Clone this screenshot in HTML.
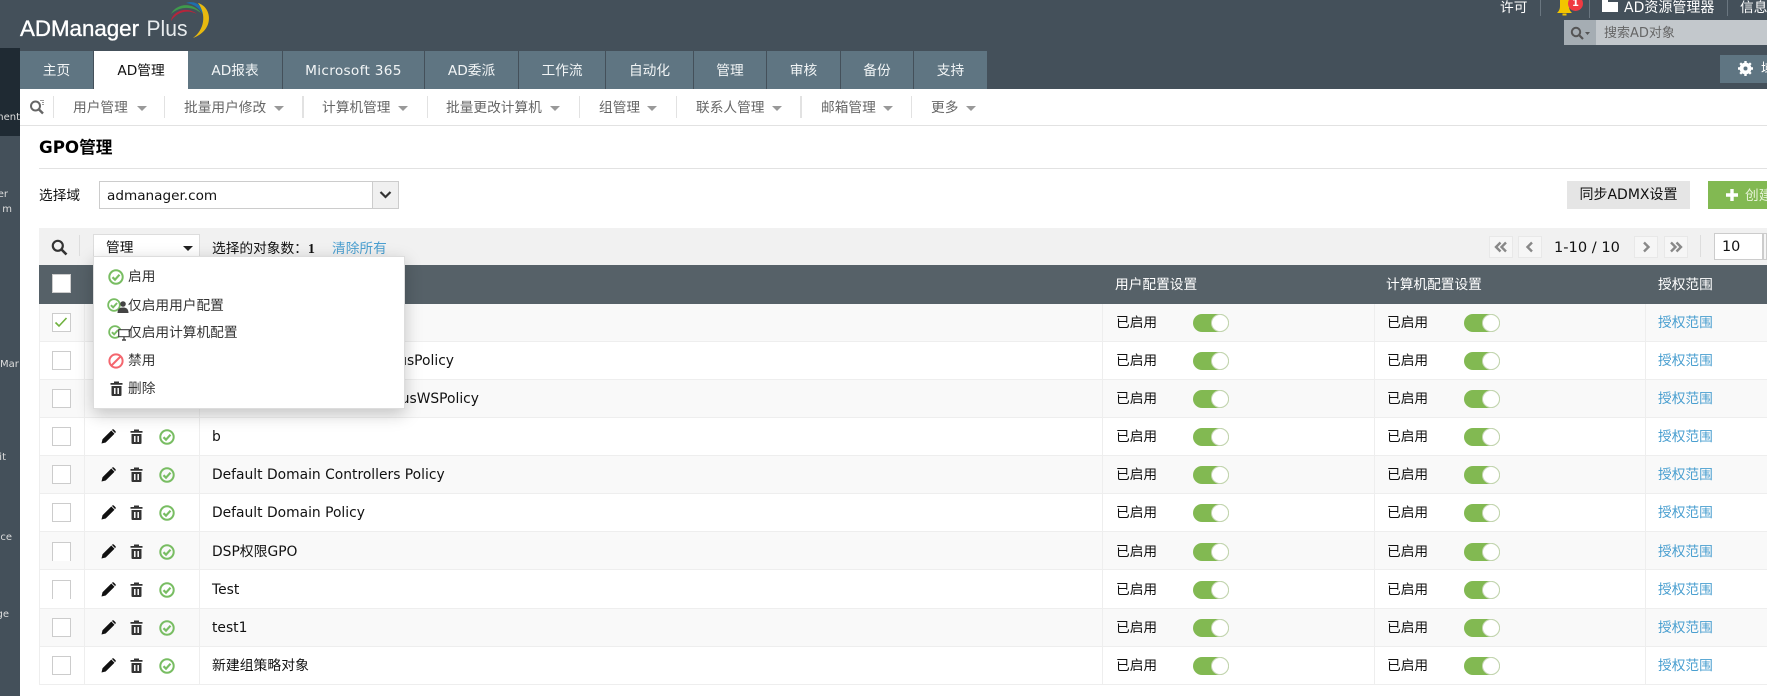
<!DOCTYPE html>
<html lang="zh"><head><meta charset="utf-8"><title>GPO管理</title>
<style>
html,body{margin:0;padding:0;background:#fff}
body{position:relative;width:1767px;height:696px;overflow:hidden;font-family:"DejaVu Sans","Noto Sans CJK SC",sans-serif;font-size:13.7px;color:#111}
.a{position:absolute;white-space:nowrap}
.tab{position:absolute;top:51px;height:38px;line-height:40px;background:#5f7582;color:#f2f5f6;text-align:center;box-sizing:border-box;border-right:1px solid #44505a;font-size:13.7px}
.sn{position:absolute;top:89px;height:36px;line-height:38px;color:#666;white-space:nowrap}
.sep{position:absolute;top:96px;height:22px;width:1px;background:#e2e2e2}
.car{position:absolute;top:106px;width:0;height:0;border-left:5px solid transparent;border-right:5px solid transparent;border-top:5px solid #999}
.side{position:absolute;left:0;width:20px;height:14px;line-height:14px;overflow:hidden;color:#ddd;font-size:10px}
.side span{position:absolute;white-space:nowrap;right:0}
.row{position:absolute;left:39px;width:1728px;height:38px;box-sizing:border-box;border-bottom:1px solid #eee;border-left:1px solid #eee;line-height:39px}
.g{background:#f9f9f9}
.v{position:absolute;top:0;bottom:0;width:1px;background:#eee}
.cb{position:absolute;left:12px;top:9px;width:19px;height:19px;box-sizing:border-box;border:1.5px solid #ccc;background:#fff}
.nm{position:absolute;left:172px;white-space:nowrap;font-size:13.85px}
.en{position:absolute;white-space:nowrap}
.lk{position:absolute;left:1618px;color:#4a9fd0;white-space:nowrap}
.tg{position:absolute;top:10px;width:36px;height:18px;border-radius:9px;background:#82b952}
.tg:after{content:"";position:absolute;right:0;top:0;width:18px;height:18px;box-sizing:border-box;border-radius:9px;background:#fff;border:1px solid #c6d6b4}
.ic{position:absolute}
.pg{position:absolute;top:236px;width:24px;height:22px;box-sizing:border-box;background:#f6f6f6;border:1px solid #e8e8e8}
.pg svg{position:absolute;left:4px;top:4px}
.mi{position:absolute;left:128px;color:#333;white-space:nowrap;line-height:20px}
</style></head><body>
<svg width="0" height="0" style="position:absolute">
<defs>
<symbol id="pen" viewBox="0 0 15 15"><path d="M0.500 14.500l1-4.200L10.300 1.500l3.200 3.200-8.800 8.800z M11.200 0.600c.5-.5 1.200-.5 1.700 0l1.500 1.500c.5.5.5 1.200 0 1.700l-.3.3-3.200-3.200z" fill="#111"/></symbol>
<symbol id="tr" viewBox="0 0 13 15"><path d="M4 0.500h5v1.500h3.500v1.800H0.500V2H4z M1.500 5h10v9c0 .5-.4 1-1 1h-8c-.6 0-1-.5-1-1z" fill="#333"/><path d="M4.800 7v6M8.200 7v6" stroke="#fff" stroke-width="1.500"/></symbol>
<symbol id="ok" viewBox="0 0 16 16"><circle cx="8" cy="8" r="6.700" fill="none" stroke="#78bd62" stroke-width="2"/><path d="M4.500 8.200l2.500 2.500 4.500-5" fill="none" stroke="#78bd62" stroke-width="2.200"/></symbol>
</defs></svg>

<!-- top bar -->
<div class="a" style="left:0;top:0;width:1767px;height:89px;background:#44505a"></div>
<div class="a" style="left:0;top:48px;width:20px;height:648px;background:#44505a"></div>
<div class="a" style="left:0;top:48px;width:20px;height:88px;background:#1f2a33"></div>
<div class="side" style="top:111px"><span>Management</span></div>
<div class="side" style="top:188px"><span style="right:12px">er</span></div>
<div class="side" style="top:203px"><span style="right:8px">m</span></div>
<div class="side" style="top:358px"><span style="right:auto;left:0">Mar</span></div>
<div class="side" style="top:451px"><span style="right:14px">it</span></div>
<div class="side" style="top:531px"><span style="right:8px">ice</span></div>
<div class="side" style="top:608px"><span style="right:11px">ge</span></div>

<!-- logo -->
<svg class="a" style="left:18px;top:0" width="200" height="48" viewBox="18 0 200 48">
<text x="20" y="36" fill="#fff" stroke="#fff" stroke-width=".35" font-family="Liberation Sans" font-size="22" textLength="119" lengthAdjust="spacingAndGlyphs">ADManager</text>
<text x="146.500" y="36" fill="#e8ecee" font-family="Liberation Sans" font-size="22" textLength="41" lengthAdjust="spacingAndGlyphs">Plus</text>
<path d="M171 21C172 12 186 5 197 14C187 9 177 12 171 21z" fill="#b8243a"/>
<path d="M171 14C176 4 192 1 201 13C192 6 180 6 171 14z" fill="#3f9a4c"/>
<path d="M186 3C194 0 205 4 206 22C203 11 196 4 186 3z" fill="#1d6fae"/>
<path d="M198 3C212 7 215 30 193 38C204 30 207 15 198 3z" fill="#e8b90f"/>
</svg>

<!-- top right -->
<div class="a" style="left:1500px;top:-1px;color:#fff;line-height:18px">许可</div>
<div class="a" style="left:1540px;top:0;width:1px;height:16px;background:#6a7680"></div>
<svg class="a" style="left:1556px;top:0" width="17" height="16" viewBox="0 0 17 16"><path d="M4 0h9v6c0 3 1 5 3 7H1c2-2 3-4 3-7z M6.500 13.500h4v2h-4z" fill="#f2c500"/></svg>
<div class="a" style="left:1568px;top:-4px;width:15px;height:15px;border-radius:8px;background:#ef3a42;color:#fff;font-size:10px;font-weight:bold;text-align:center;line-height:15px">1</div>
<div class="a" style="left:1589px;top:0;width:1px;height:18px;background:#6a7680"></div>
<svg class="a" style="left:1602px;top:0" width="16" height="12" viewBox="0 0 16 12"><path d="M0 0h6v2h10v10H0z" fill="#fff"/></svg>
<div class="a" style="left:1624px;top:-1px;color:#fff;line-height:18px;font-size:14px">AD资源管理器</div>
<div class="a" style="left:1727px;top:0;width:1px;height:16px;background:#6a7680"></div>
<div class="a" style="left:1740px;top:-1px;color:#fff;line-height:18px">信息</div>
<div class="a" style="left:1564px;top:20px;width:32px;height:25px;background:#a5adb3"></div>
<div class="a" style="left:1596px;top:20px;width:171px;height:25px;background:#c3c8cc;color:#666;line-height:27px;text-indent:8px;font-size:13px">搜索AD对象</div>
<svg class="a" style="left:1570px;top:26px" width="22" height="14" viewBox="0 0 22 14"><circle cx="6" cy="6" r="4.200" fill="none" stroke="#555" stroke-width="2"/><path d="M9 9l4 4" stroke="#555" stroke-width="2.200"/><path d="M15 6h5l-2.500 3z" fill="#555"/></svg>
<div class="a" style="left:1720px;top:55px;width:47px;height:28px;background:#5f7582"></div>
<svg class="a" style="left:1738px;top:61px" width="15" height="15" viewBox="0 0 15 15"><circle cx="7.500" cy="7.500" r="4.400" fill="none" stroke="#fff" stroke-width="3"/><path d="M7.500 0v15M0 7.500h15M2.200 2.200l10.600 10.600M12.800 2.200L2.200 12.800" stroke="#fff" stroke-width="2.400"/><circle cx="7.500" cy="7.500" r="2" fill="#5f7582"/></svg>
<div class="a" style="left:1761px;top:55px;width:6px;height:28px;overflow:hidden;color:#fff;line-height:28px">域</div>

<!-- tabs -->
<div class="tab" style="left:20px;width:74px">主页</div>
<div class="tab" style="left:94px;width:94px;background:#fff;color:#111;border:0">AD管理</div>
<div class="tab" style="left:188px;width:95px">AD报表</div>
<div class="tab" style="left:283px;width:142px;letter-spacing:.3px">Microsoft 365</div>
<div class="tab" style="left:425px;width:94px">AD委派</div>
<div class="tab" style="left:519px;width:87px">工作流</div>
<div class="tab" style="left:606px;width:88px">自动化</div>
<div class="tab" style="left:694px;width:73px">管理</div>
<div class="tab" style="left:767px;width:74px">审核</div>
<div class="tab" style="left:841px;width:73px">备份</div>
<div class="tab" style="left:914px;width:73px;border-right:0">支持</div>

<!-- subnav -->
<svg class="a" style="left:29px;top:99px" width="16" height="16" viewBox="0 0 16 16"><circle cx="6.500" cy="7" r="4.500" fill="none" stroke="#666" stroke-width="2"/><path d="M10 10.500l4 4" stroke="#666" stroke-width="2.400"/><path d="M11 1.500h4M13 3.500h2M13 5.500h2" stroke="#999"/></svg>
<div class="sep" style="left:53px"></div>
<div class="sn" style="left:73px">用户管理</div><div class="car" style="left:137px"></div>
<div class="sep" style="left:164px"></div>
<div class="sn" style="left:184px">批量用户修改</div><div class="car" style="left:274px"></div>
<div class="sep" style="left:302px;width:2px"></div>
<div class="sn" style="left:322px">计算机管理</div><div class="car" style="left:398px"></div>
<div class="sep" style="left:427px"></div>
<div class="sn" style="left:446px">批量更改计算机</div><div class="car" style="left:550px"></div>
<div class="sep" style="left:579px"></div>
<div class="sn" style="left:599px">组管理</div><div class="car" style="left:647px"></div>
<div class="sep" style="left:676px"></div>
<div class="sn" style="left:696px">联系人管理</div><div class="car" style="left:772px"></div>
<div class="sep" style="left:800px;width:2px"></div>
<div class="sn" style="left:821px">邮箱管理</div><div class="car" style="left:883px"></div>
<div class="sep" style="left:911px"></div>
<div class="sn" style="left:931px">更多</div><div class="car" style="left:966px"></div>
<div class="a" style="left:20px;top:125px;width:1747px;height:1px;background:#e2e2e2"></div>

<!-- title -->
<div class="a" style="left:39px;top:135px;font-size:16.700px;font-weight:bold;line-height:24px;color:#000">GPO管理</div>
<div class="a" style="left:39px;top:168px;width:1728px;height:1px;background:#e2e2e2"></div>
<div class="a" style="left:39px;top:186px;line-height:20px;font-size:13.700px">选择域</div>
<div class="a" style="left:99px;top:181px;width:300px;height:28px;box-sizing:border-box;border:1px solid #ccc;background:#fff;line-height:28px;padding-left:7px;font-size:13.600px">admanager.com</div>
<div class="a" style="left:372px;top:182px;width:25px;height:26px;background:#f0f0f0;border-left:1px solid #ccc"></div>
<svg class="a" style="left:379px;top:191px" width="13" height="8" viewBox="0 0 13 8"><path d="M1.500 1l5 5 5-5" fill="none" stroke="#333" stroke-width="2.200"/></svg>
<div class="a" style="left:1567px;top:181px;width:123px;height:28px;background:#e5e5e5;text-align:center;line-height:28px;font-size:14px">同步ADMX设置</div>
<div class="a" style="left:1708px;top:181px;width:59px;height:28px;background:#82b952"></div>
<svg class="a" style="left:1726px;top:189px" width="12" height="12" viewBox="0 0 12 12"><path d="M6 0v12M0 6h12" stroke="#fff" stroke-width="3.400"/></svg>
<div class="a" style="left:1745px;top:181px;line-height:30px;color:#e8f4da">创建</div>

<!-- toolbar -->
<div class="a" style="left:39px;top:228px;width:1728px;height:37px;background:#f1f1f1"></div>
<svg class="a" style="left:51px;top:239px" width="17" height="17" viewBox="0 0 17 17"><circle cx="6.800" cy="6.800" r="5" fill="none" stroke="#333" stroke-width="2.200"/><path d="M10.500 10.500l5 5" stroke="#333" stroke-width="2.600"/></svg>
<div class="a" style="left:79px;top:235px;width:1px;height:21px;background:#ddd"></div>
<div class="a" style="left:93px;top:234px;width:107px;height:30px;box-sizing:border-box;border:1px solid #ddd;background:#fff;line-height:26px;padding-left:12px;font-size:13.700px">管理</div>
<div class="a" style="left:183px;top:246px;width:0;height:0;border-left:5px solid transparent;border-right:5px solid transparent;border-top:5px solid #222"></div>
<div class="a" style="left:212px;top:239px;line-height:20px">选择的对象数：<b style="font-family:'Liberation Serif',serif;font-size:14px">1</b></div>
<div class="a" style="left:332px;top:239px;line-height:20px;color:#4a9fd0">清除所有</div>

<div class="pg" style="left:1489px"><svg width="14" height="12" viewBox="0 0 14 12"><path d="M6.500 1.500L2 6l4.500 4.500M12 1.500L7.500 6l4.500 4.500" fill="none" stroke="#888" stroke-width="2.400"/></svg></div>
<div class="pg" style="left:1518px"><svg width="14" height="12" viewBox="0 0 14 12"><path d="M9 1.500L4.500 6 9 10.500" fill="none" stroke="#888" stroke-width="2.400"/></svg></div>
<div class="a" style="left:1554px;top:238px;line-height:20px;font-size:14.600px">1-10 / 10</div>
<div class="pg" style="left:1634px"><svg width="14" height="12" viewBox="0 0 14 12"><path d="M5 1.500L9.500 6 5 10.500" fill="none" stroke="#888" stroke-width="2.400"/></svg></div>
<div class="pg" style="left:1664px"><svg width="14" height="12" viewBox="0 0 14 12"><path d="M2 1.500L6.500 6 2 10.500M7.500 1.500L12 6l-4.500 4.500" fill="none" stroke="#888" stroke-width="2.400"/></svg></div>
<div class="a" style="left:1700px;top:235px;width:1px;height:22px;background:#ddd"></div>
<div class="a" style="left:1714px;top:233px;width:49px;height:27px;box-sizing:border-box;border:1px solid #ccc;background:#fff;line-height:27px;padding-left:7px;font-size:14.400px">10</div>
<div class="a" style="left:1763px;top:233px;width:4px;height:27px;background:#f6f6f6;box-sizing:border-box;border:1px solid #ccc"></div>

<!-- table head -->
<div class="a" style="left:39px;top:265px;width:1728px;height:39px;background:#566168"></div>
<div class="a" style="left:52px;top:274px;width:19px;height:19px;box-sizing:border-box;border:1.500px solid #ccc;background:#fff"></div>
<div class="a" style="left:1115px;top:265px;line-height:41px;color:#fff">用户配置设置</div>
<div class="a" style="left:1386px;top:265px;line-height:41px;color:#fff">计算机配置设置</div>
<div class="a" style="left:1658px;top:265px;line-height:41px;color:#fff">授权范围</div>

<!-- rows -->
<div class="row g" style="top:304px"><i class="v" style="left:44px"></i><i class="v" style="left:159px"></i><i class="v" style="left:1062px"></i><i class="v" style="left:1334px"></i><i class="v" style="left:1605px"></i><div class="cb"><svg width="16" height="16" viewBox="0 0 16 16" style="position:absolute;left:0;top:0"><path d="M2.500 8.500l3.500 3.500 7.500-8" fill="none" stroke="#6fb13e" stroke-width="1.600"/></svg></div><span class="en" style="left:1076px">已启用</span><i class="tg" style="left:1153px"></i><span class="en" style="left:1347px">已启用</span><i class="tg" style="left:1424px"></i><span class="lk">授权范围</span></div>
<div class="row" style="top:342px"><i class="v" style="left:44px"></i><i class="v" style="left:159px"></i><i class="v" style="left:1062px"></i><i class="v" style="left:1334px"></i><i class="v" style="left:1605px"></i><div class="cb"></div><span class="nm" style="left:auto;right:1313px">usPolicy</span><span class="en" style="left:1076px">已启用</span><i class="tg" style="left:1153px"></i><span class="en" style="left:1347px">已启用</span><i class="tg" style="left:1424px"></i><span class="lk">授权范围</span></div>
<div class="row g" style="top:380px"><i class="v" style="left:44px"></i><i class="v" style="left:159px"></i><i class="v" style="left:1062px"></i><i class="v" style="left:1334px"></i><i class="v" style="left:1605px"></i><div class="cb"></div><span class="nm" style="left:auto;right:1288px">usWSPolicy</span><span class="en" style="left:1076px">已启用</span><i class="tg" style="left:1153px"></i><span class="en" style="left:1347px">已启用</span><i class="tg" style="left:1424px"></i><span class="lk">授权范围</span></div>
<div class="row" style="top:418px"><i class="v" style="left:44px"></i><i class="v" style="left:159px"></i><i class="v" style="left:1062px"></i><i class="v" style="left:1334px"></i><i class="v" style="left:1605px"></i><div class="cb"></div><svg class="ic" style="left:61px;top:11px" width="15" height="15"><use href="#pen"/></svg><svg class="ic" style="left:90px;top:11px" width="13" height="15"><use href="#tr"/></svg><svg class="ic" style="left:119px;top:11px" width="16" height="16"><use href="#ok"/></svg><span class="nm">b</span><span class="en" style="left:1076px">已启用</span><i class="tg" style="left:1153px"></i><span class="en" style="left:1347px">已启用</span><i class="tg" style="left:1424px"></i><span class="lk">授权范围</span></div>
<div class="row g" style="top:456px"><i class="v" style="left:44px"></i><i class="v" style="left:159px"></i><i class="v" style="left:1062px"></i><i class="v" style="left:1334px"></i><i class="v" style="left:1605px"></i><div class="cb"></div><svg class="ic" style="left:61px;top:11px" width="15" height="15"><use href="#pen"/></svg><svg class="ic" style="left:90px;top:11px" width="13" height="15"><use href="#tr"/></svg><svg class="ic" style="left:119px;top:11px" width="16" height="16"><use href="#ok"/></svg><span class="nm">Default Domain Controllers Policy</span><span class="en" style="left:1076px">已启用</span><i class="tg" style="left:1153px"></i><span class="en" style="left:1347px">已启用</span><i class="tg" style="left:1424px"></i><span class="lk">授权范围</span></div>
<div class="row" style="top:494px"><i class="v" style="left:44px"></i><i class="v" style="left:159px"></i><i class="v" style="left:1062px"></i><i class="v" style="left:1334px"></i><i class="v" style="left:1605px"></i><div class="cb"></div><svg class="ic" style="left:61px;top:11px" width="15" height="15"><use href="#pen"/></svg><svg class="ic" style="left:90px;top:11px" width="13" height="15"><use href="#tr"/></svg><svg class="ic" style="left:119px;top:11px" width="16" height="16"><use href="#ok"/></svg><span class="nm">Default Domain Policy</span><span class="en" style="left:1076px">已启用</span><i class="tg" style="left:1153px"></i><span class="en" style="left:1347px">已启用</span><i class="tg" style="left:1424px"></i><span class="lk">授权范围</span></div>
<div class="row g" style="top:532px;line-height:41px"><i class="v" style="left:44px"></i><i class="v" style="left:159px"></i><i class="v" style="left:1062px"></i><i class="v" style="left:1334px"></i><i class="v" style="left:1605px"></i><div class="cb" style="border-bottom:0;top:10px"></div><svg class="ic" style="left:61px;top:12px" width="15" height="15"><use href="#pen"/></svg><svg class="ic" style="left:90px;top:12px" width="13" height="15"><use href="#tr"/></svg><svg class="ic" style="left:119px;top:12px" width="16" height="16"><use href="#ok"/></svg><span class="nm">DSP权限GPO</span><span class="en" style="left:1076px">已启用</span><i class="tg" style="left:1153px;top:11px"></i><span class="en" style="left:1347px">已启用</span><i class="tg" style="left:1424px;top:11px"></i><span class="lk">授权范围</span></div>
<div class="row" style="top:570px;height:39px;line-height:41px"><i class="v" style="left:44px"></i><i class="v" style="left:159px"></i><i class="v" style="left:1062px"></i><i class="v" style="left:1334px"></i><i class="v" style="left:1605px"></i><div class="cb" style="border-bottom:0;top:10px"></div><svg class="ic" style="left:61px;top:12px" width="15" height="15"><use href="#pen"/></svg><svg class="ic" style="left:90px;top:12px" width="13" height="15"><use href="#tr"/></svg><svg class="ic" style="left:119px;top:12px" width="16" height="16"><use href="#ok"/></svg><span class="nm">Test</span><span class="en" style="left:1076px">已启用</span><i class="tg" style="left:1153px;top:11px"></i><span class="en" style="left:1347px">已启用</span><i class="tg" style="left:1424px;top:11px"></i><span class="lk">授权范围</span></div>
<div class="row g" style="top:609px"><i class="v" style="left:44px"></i><i class="v" style="left:159px"></i><i class="v" style="left:1062px"></i><i class="v" style="left:1334px"></i><i class="v" style="left:1605px"></i><div class="cb"></div><svg class="ic" style="left:61px;top:11px" width="15" height="15"><use href="#pen"/></svg><svg class="ic" style="left:90px;top:11px" width="13" height="15"><use href="#tr"/></svg><svg class="ic" style="left:119px;top:11px" width="16" height="16"><use href="#ok"/></svg><span class="nm">test1</span><span class="en" style="left:1076px">已启用</span><i class="tg" style="left:1153px"></i><span class="en" style="left:1347px">已启用</span><i class="tg" style="left:1424px"></i><span class="lk">授权范围</span></div>
<div class="row" style="top:647px"><i class="v" style="left:44px"></i><i class="v" style="left:159px"></i><i class="v" style="left:1062px"></i><i class="v" style="left:1334px"></i><i class="v" style="left:1605px"></i><div class="cb"></div><svg class="ic" style="left:61px;top:11px" width="15" height="15"><use href="#pen"/></svg><svg class="ic" style="left:90px;top:11px" width="13" height="15"><use href="#tr"/></svg><svg class="ic" style="left:119px;top:11px" width="16" height="16"><use href="#ok"/></svg><span class="nm">新建组策略对象</span><span class="en" style="left:1076px">已启用</span><i class="tg" style="left:1153px"></i><span class="en" style="left:1347px">已启用</span><i class="tg" style="left:1424px"></i><span class="lk">授权范围</span></div>

<!-- dropdown menu -->
<div class="a" style="left:93px;top:256px;width:312px;height:153px;box-sizing:border-box;background:#fff;border:1px solid #ddd;box-shadow:0 5px 16px rgba(0,0,0,.22)"></div>
<svg class="ic" style="left:108px;top:269px" width="16" height="16"><use href="#ok"/></svg>
<div class="mi" style="top:267px">启用</div>
<svg class="ic" style="left:107px;top:298px" width="14" height="14"><use href="#ok"/></svg>
<svg class="a" style="left:117px;top:301px" width="12" height="12" viewBox="0 0 12 12"><circle cx="6" cy="3" r="2.800" fill="#444"/><path d="M0.500 12c0-4 2-5.500 5.500-5.500S11.500 8 11.500 12z" fill="#444"/></svg>
<div class="mi" style="top:296px">仅启用用户配置</div>
<svg class="ic" style="left:108px;top:325px" width="14" height="14"><use href="#ok"/></svg>
<svg class="a" style="left:118px;top:329px" width="12" height="12" viewBox="0 0 12 12"><path d="M0.700 0.700h10.600v7H0.700z" fill="#fff" stroke="#444" stroke-width="1.200"/><path d="M4 11h4M6 8v3" stroke="#444" stroke-width="1.400"/></svg>
<div class="mi" style="top:323px">仅启用计算机配置</div>
<svg class="a" style="left:108px;top:353px" width="16" height="16" viewBox="0 0 16 16"><circle cx="8" cy="8" r="6.600" fill="none" stroke="#f4666e" stroke-width="2"/><path d="M3.500 12.500l9-9" stroke="#f4666e" stroke-width="2"/></svg>
<div class="mi" style="top:351px">禁用</div>
<svg class="ic" style="left:110px;top:381px" width="13" height="15"><use href="#tr"/></svg>
<div class="mi" style="top:379px">删除</div>
</body></html>
